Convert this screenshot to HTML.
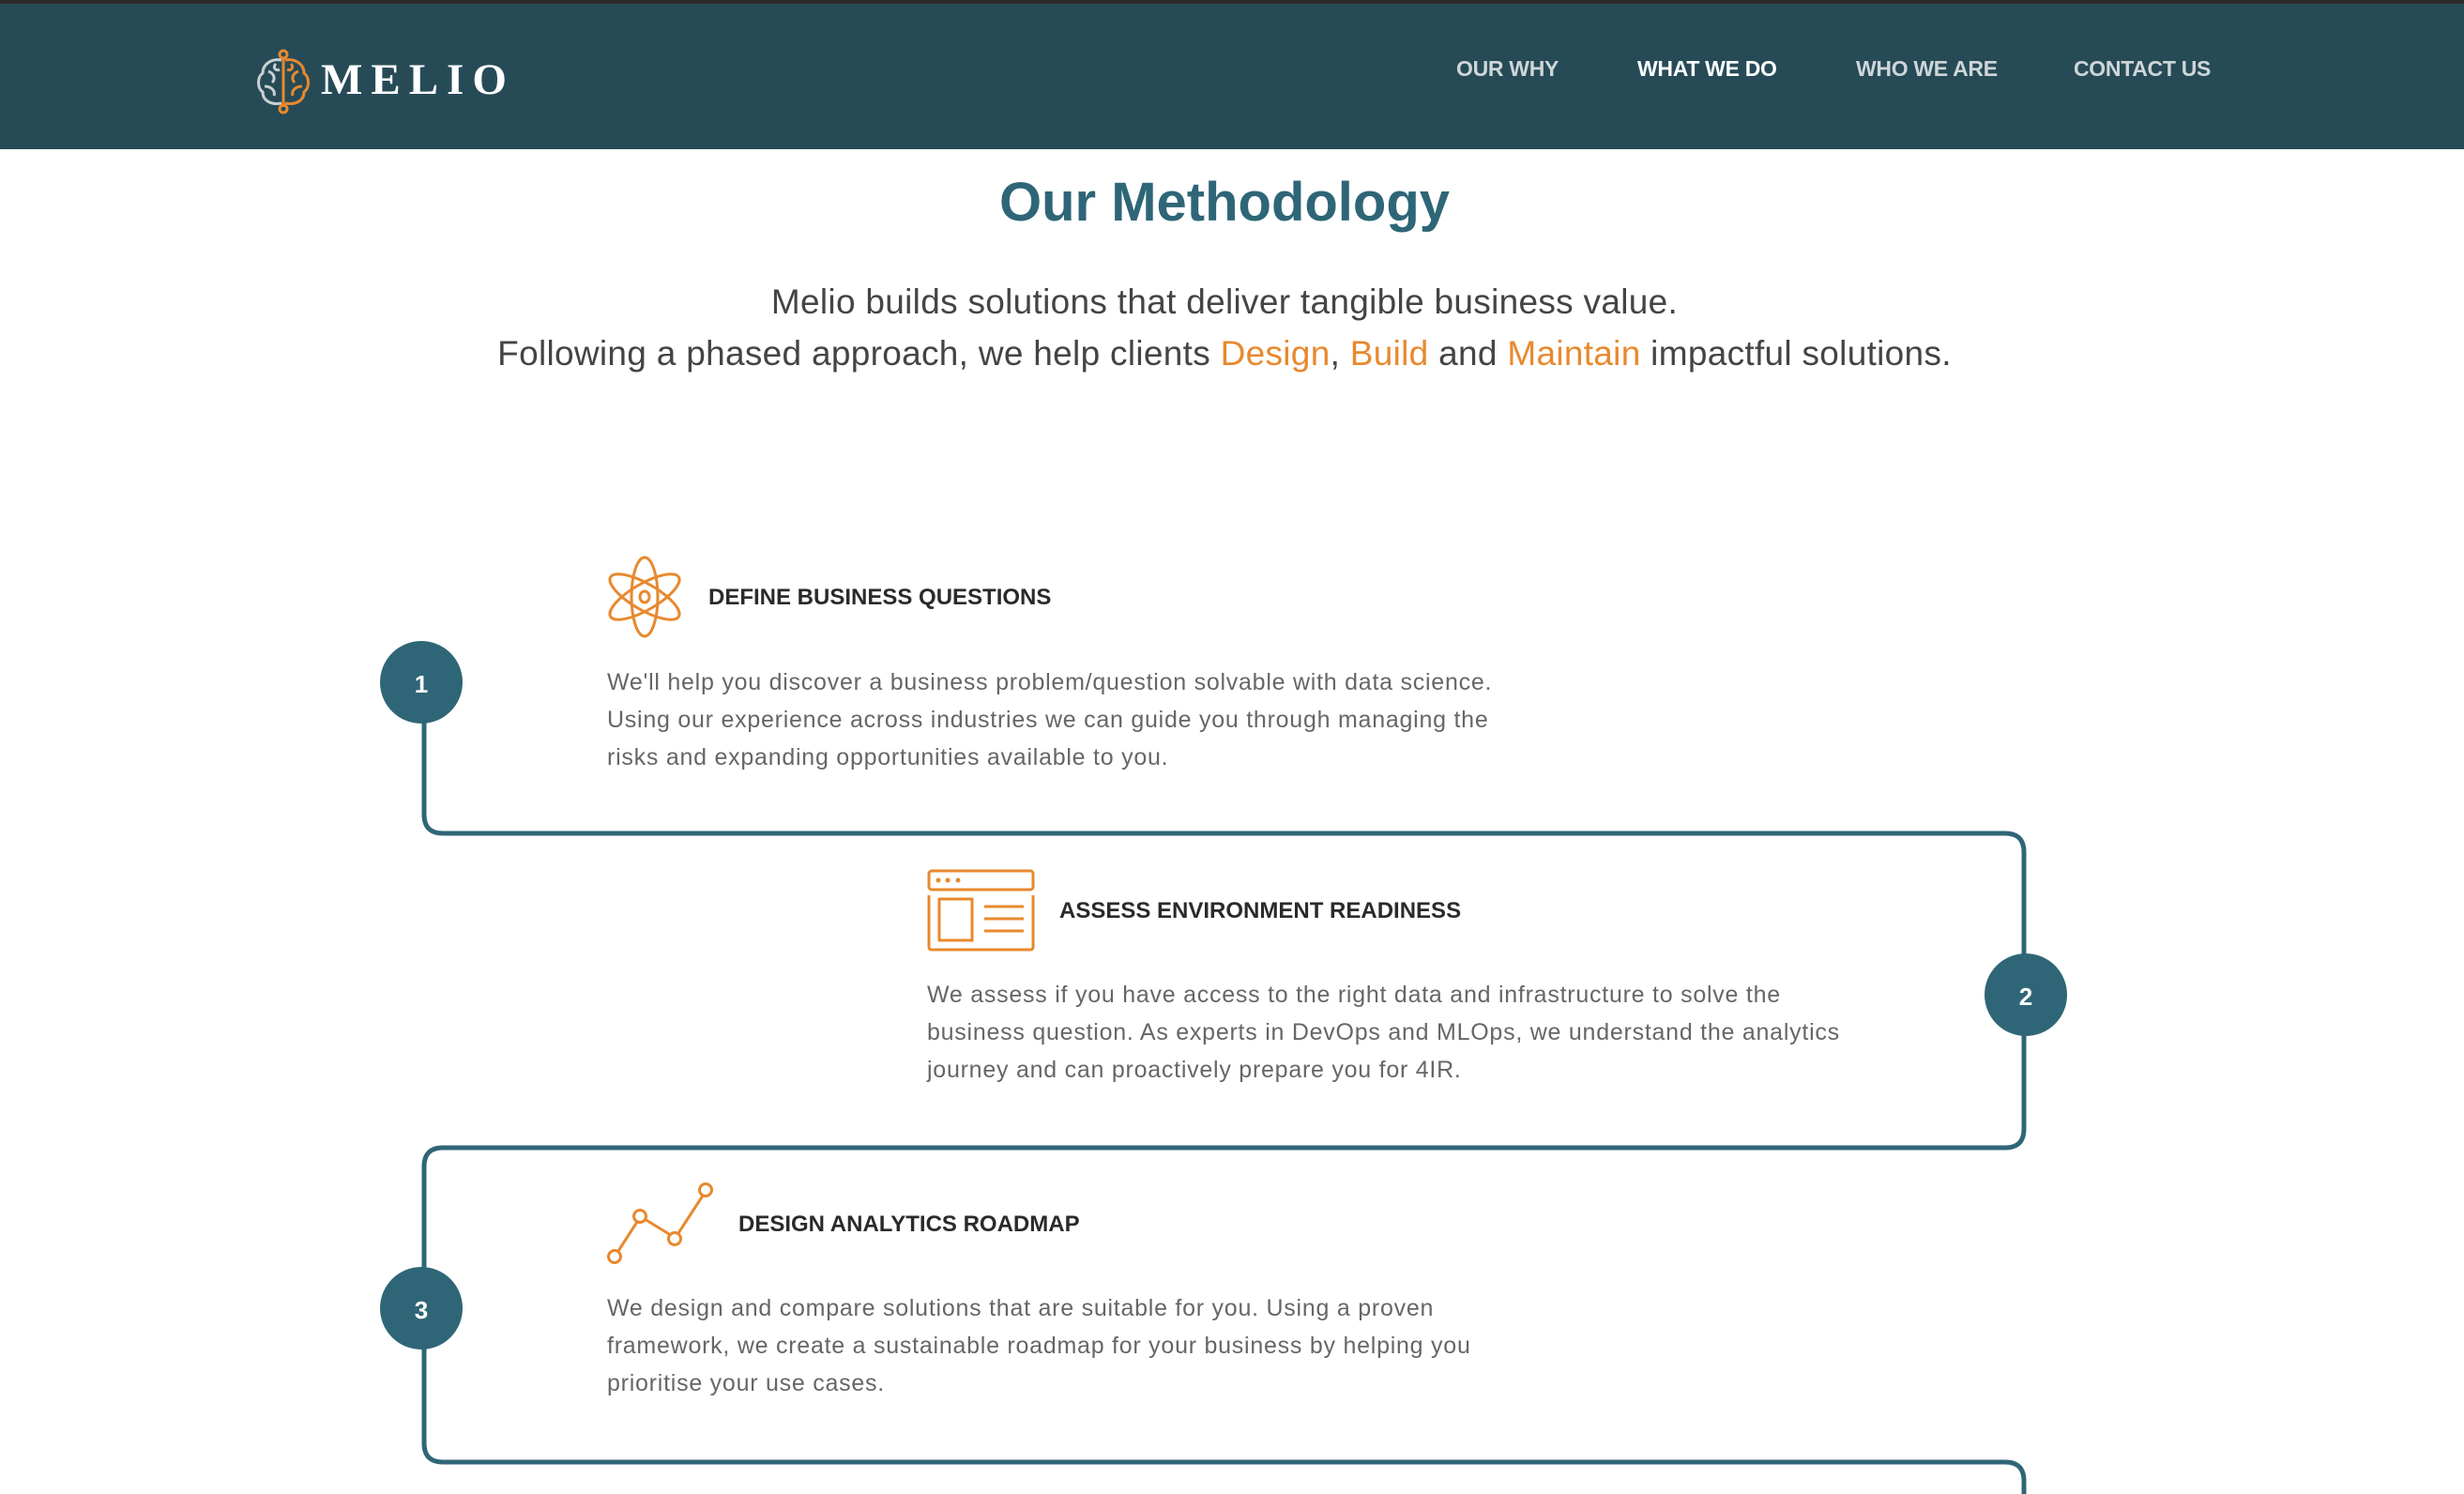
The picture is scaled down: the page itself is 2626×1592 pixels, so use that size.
<!DOCTYPE html>
<html><head><meta charset="utf-8"><style>
*{margin:0;padding:0;box-sizing:border-box}
body{width:2626px;height:1592px;background:#fff;position:relative;overflow:hidden;font-family:"Liberation Sans",sans-serif}
.hdr{position:absolute;left:0;top:0;width:2626px;height:159px;background:#264b57;border-top:4px solid #2b2b2b}
.nav{position:absolute;top:56px;font-size:23px;font-weight:bold;color:#cfd6d8;letter-spacing:-0.3px;white-space:nowrap}
.abs{position:absolute;white-space:nowrap}
h1{position:absolute;left:0;width:2610px;text-align:center;top:182px;font-size:58px;color:#2e6677;font-weight:bold}
.sub{position:absolute;left:0;width:2610px;text-align:center;font-size:37px;color:#444;letter-spacing:0.3px}
.o{color:#e8892e}
.h{font-size:24px;font-weight:bold;color:#2a2a2a}
.b{font-size:25px;color:#666;line-height:40px;letter-spacing:0.75px}
.c{position:absolute;width:88px;height:88px;border-radius:50%;background:#2f6677;color:#fff;font-weight:bold;font-size:26px;text-align:center;line-height:92px}
</style></head><body>
<div class="hdr">
<svg class="abs" style="left:272px;top:48px" width="60" height="70" viewBox="0 0 60 70" fill="none" stroke-width="3">
<path d="M28 12 C18 10 8 16 8 26 C2 30 2 42 8 46 C8 56 18 60 28 58" stroke="#c9d0d2"/>
<path d="M14 24 C20 26 22 32 18 36 M10 40 C16 40 22 44 20 50 M22 16 C18 20 22 24 26 22" stroke="#c9d0d2"/>
<path d="M32 12 C42 10 52 16 52 26 C58 30 58 42 52 46 C52 56 42 60 32 58" stroke="#e8892e"/>
<path d="M46 24 C40 26 38 32 42 36 M50 40 C44 40 38 44 40 50 M38 16 C42 20 38 24 34 22" stroke="#e8892e"/>
<line x1="30" y1="9" x2="30" y2="62" stroke="#e8892e"/><circle cx="30" cy="6" r="4" stroke="#e8892e"/><circle cx="30" cy="64" r="4" stroke="#e8892e"/>
</svg>
<div class="abs" style="left:342px;top:54px;font-family:'Liberation Serif',serif;font-weight:bold;font-size:47px;color:#fff;letter-spacing:9px">MELIO</div>
<div class="nav" style="left:1552px">OUR WHY</div>
<div class="nav" style="left:1745px;color:#fff">WHAT WE DO</div>
<div class="nav" style="left:1978px">WHO WE ARE</div>
<div class="nav" style="left:2210px">CONTACT US</div>
</div>
<h1>Our Methodology</h1>
<div class="sub" style="top:301px">Melio builds solutions that deliver tangible business value.</div>
<div class="sub" style="top:356px">Following a phased approach, we help clients <span class="o">Design</span>, <span class="o">Build</span> and <span class="o">Maintain</span> impactful solutions.</div>

<svg class="abs" style="left:0;top:0" width="2626" height="1592" fill="none">
<path d="M452 727 V868 Q452 888 472 888 H2137 Q2157 888 2157 908 V1203 Q2157 1223 2137 1223 H472 Q452 1223 452 1243 V1538 Q452 1558 472 1558 H2137 Q2157 1558 2157 1578 V1600" stroke="#2f6677" stroke-width="5"/>
<g stroke="#e8892e" stroke-width="3">
<ellipse cx="687" cy="636" rx="14" ry="42"/>
<ellipse cx="687" cy="636" rx="14" ry="42" transform="rotate(60 687 636)"/>
<ellipse cx="687" cy="636" rx="14" ry="42" transform="rotate(-60 687 636)"/>
<ellipse cx="687" cy="636" rx="5" ry="6"/>
<rect x="990" y="928" width="111" height="20" rx="3"/>
<path d="M990 954 V1009 Q990 1012 993 1012 H1098 Q1101 1012 1101 1009 V954"/>
<rect x="1001" y="958" width="35" height="44"/>
<path d="M1049 966 H1091 M1049 979 H1091 M1049 992 H1091"/>
<path d="M659 1333 L679 1302 M687 1299 L713 1315 M723 1314 L749 1274"/>
<circle cx="655" cy="1339" r="6.5"/><circle cx="682" cy="1296" r="6.5"/><circle cx="719" cy="1320" r="6.5"/><circle cx="752" cy="1268" r="6.5"/>
</g>
<g fill="#e8892e"><circle cx="1000" cy="938" r="2.5"/><circle cx="1010" cy="938" r="2.5"/><circle cx="1021" cy="938" r="2.5"/></g>
</svg>

<div class="c" style="left:405px;top:683px">1</div>
<div class="c" style="left:2115px;top:1016px">2</div>
<div class="c" style="left:405px;top:1350px">3</div>

<div class="abs h" style="left:755px;top:623px">DEFINE BUSINESS QUESTIONS</div>
<div class="abs b" style="left:647px;top:707px">We'll help you discover a business problem/question solvable with data science.<br>Using our experience across industries we can guide you through managing the<br>risks and expanding opportunities available to you.</div>

<div class="abs h" style="left:1129px;top:957px">ASSESS ENVIRONMENT READINESS</div>
<div class="abs b" style="left:988px;top:1040px">We assess if you have access to the right data and infrastructure to solve the<br>business question. As experts in DevOps and MLOps, we understand the analytics<br>journey and can proactively prepare you for 4IR.</div>

<div class="abs h" style="left:787px;top:1291px">DESIGN ANALYTICS ROADMAP</div>
<div class="abs b" style="left:647px;top:1374px">We design and compare solutions that are suitable for you. Using a proven<br>framework, we create a sustainable roadmap for your business by helping you<br>prioritise your use cases.</div>
</body></html>
